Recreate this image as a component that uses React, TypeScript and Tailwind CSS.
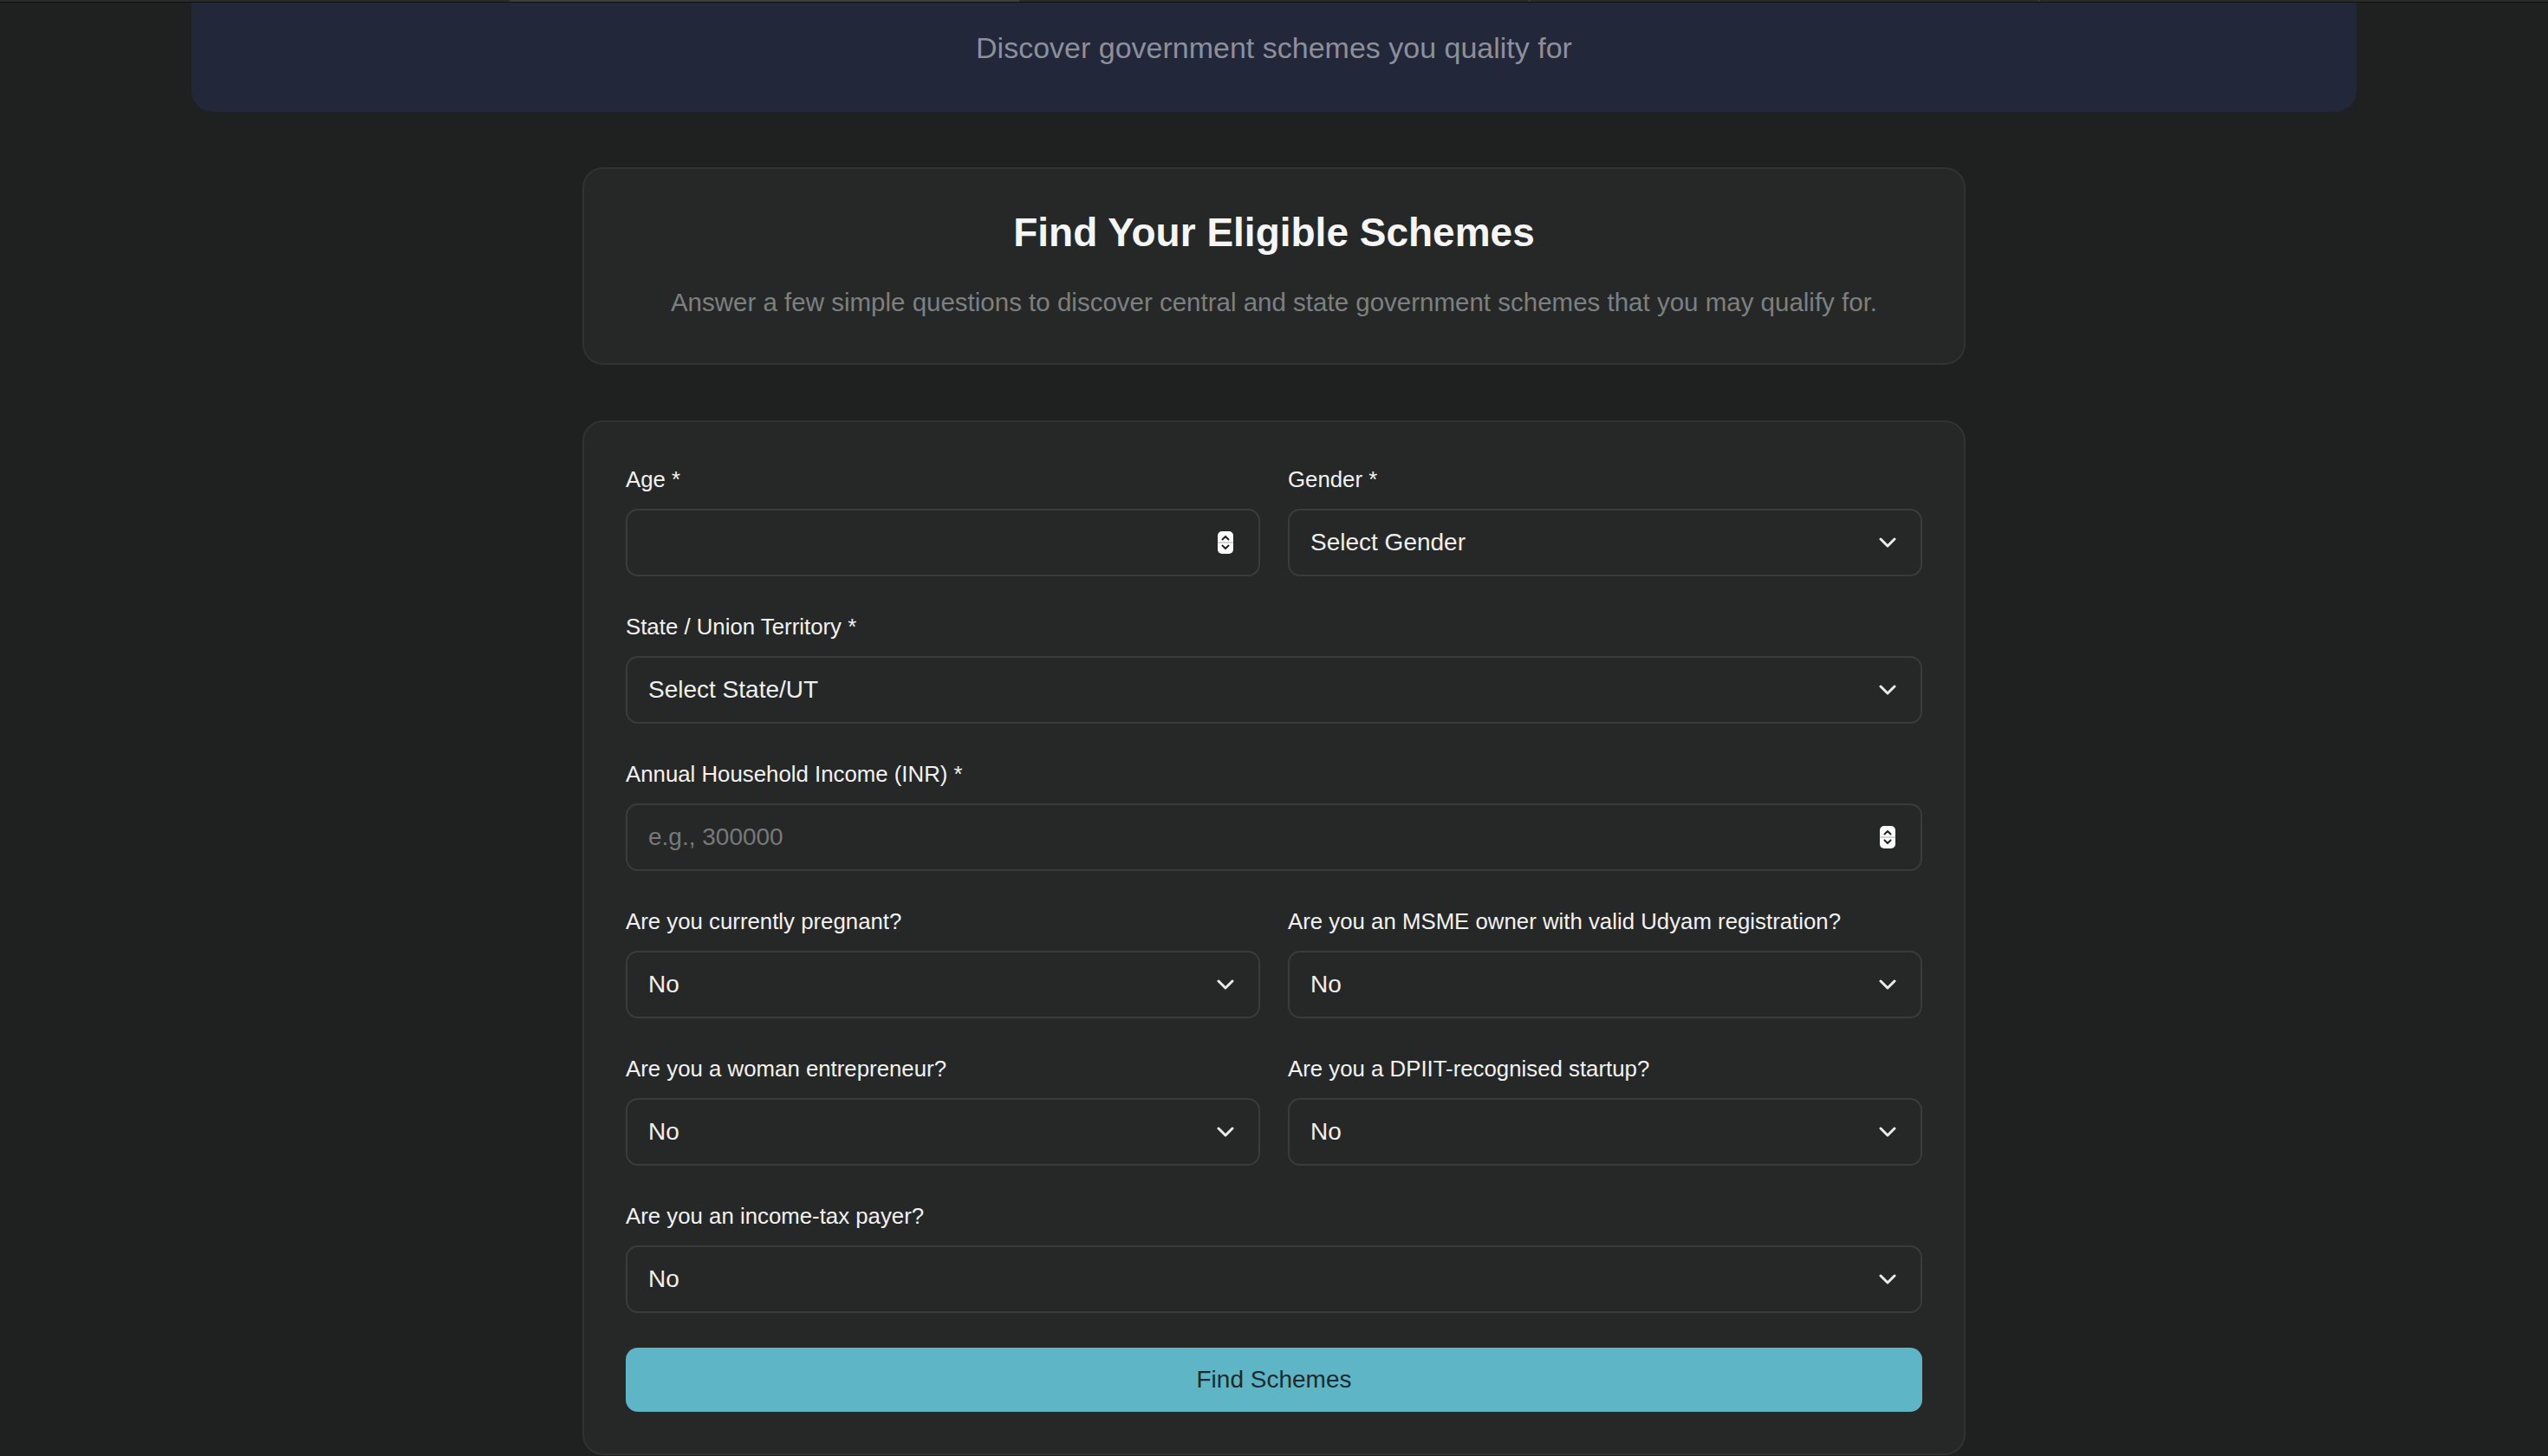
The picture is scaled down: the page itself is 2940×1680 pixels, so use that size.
import React from 'react';

const tabs = [0, 1, 2, 3, 4];

function Chevron() {
  return (
    <svg width="20" height="12" viewBox="0 0 20 12" fill="none" className="shrink-0">
      <path d="M2 2 L10 10 L18 2" stroke="#ececec" strokeWidth="3" strokeLinecap="round" strokeLinejoin="round" />
    </svg>
  );
}

function Spinner() {
  return (
    <svg width="18" height="26" viewBox="0 0 18 26" fill="none" className="shrink-0">
      <rect width="18" height="26" rx="5" fill="#ffffff" />
      <line x1="0" y1="13" x2="18" y2="13" stroke="#d4d4d4" strokeWidth="2" />
      <path d="M5.5 9.5 L9 6 L12.5 9.5" stroke="#222" strokeWidth="2" strokeLinecap="round" strokeLinejoin="round" />
      <path d="M5.5 16.5 L9 20 L12.5 16.5" stroke="#222" strokeWidth="2" strokeLinecap="round" strokeLinejoin="round" />
    </svg>
  );
}

function Field({ label, children }: { label: string; children: React.ReactNode }) {
  return (
    <div className="flex flex-col gap-[16px]">
      <label className="text-[25.8px] leading-[36px] font-medium text-[#f2f2f2]">{label}</label>
      {children}
    </div>
  );
}

function NumberBox({ placeholder = '' }: { placeholder?: string }) {
  return (
    <div className="flex items-center h-[78px] rounded-[14px] border-2 border-[#3a3c3c] bg-[#262828] pl-[24px] pr-[29px]">
      <input
        type="text"
        placeholder={placeholder}
        className="flex-1 bg-transparent outline-none text-[28px] text-[#eeeeee] placeholder:text-[#77797a]"
      />
      <Spinner />
    </div>
  );
}

function SelectBox({ value }: { value: string }) {
  return (
    <div className="flex items-center h-[78px] rounded-[14px] border-2 border-[#3a3c3c] bg-[#262828] pl-[24px] pr-[28px]">
      <select className="flex-1 appearance-none bg-transparent outline-none text-[28px] text-[#efefef]">
        <option>{value}</option>
      </select>
      <Chevron />
    </div>
  );
}

export default function App() {
  return (
    <div className="min-h-screen bg-[#1f2120] font-['Liberation_Sans',Arial,sans-serif] overflow-hidden">
      <div className="grid grid-cols-5 h-[3px] bg-[#2a2b2b] border-b border-[#111]">
        {tabs.map((t) => (
          <div key={t} className={t === 1 ? 'bg-[#3d3e40]' : t > 2 ? 'border-l border-[#444]' : ''} />
        ))}
      </div>

      <header className="mx-auto w-[2498px] rounded-b-[24px] bg-[#222739] pt-[30px] pb-[52px] text-center">
        <p className="text-[34px] leading-[44px] text-[#8c909a]">Discover government schemes you quality for</p>
      </header>

      <main className="mx-auto w-[1596px] mt-[64px] flex flex-col gap-[64px]">
        <section className="rounded-[24px] border-2 border-[#313333] bg-[#262828] p-[48px] text-center">
          <h2 className="text-[46px] leading-[50px] font-bold text-[#f5f5f5]">Find Your Eligible Schemes</h2>
          <p className="mt-[34px] text-[29.5px] leading-[44px] text-[#7d8080]">
            Answer a few simple questions to discover central and state government schemes that you may qualify for.
          </p>
        </section>

        <section className="rounded-[24px] border-2 border-[#313333] bg-[#262828] p-[48px] flex flex-col gap-[40px]">
          <div className="grid grid-cols-2 gap-x-[32px]">
            <Field label="Age *">
              <NumberBox />
            </Field>
            <Field label="Gender *">
              <SelectBox value="Select Gender" />
            </Field>
          </div>
          <Field label="State / Union Territory *">
            <SelectBox value="Select State/UT" />
          </Field>
          <Field label="Annual Household Income (INR) *">
            <NumberBox placeholder="e.g., 300000" />
          </Field>
          <div className="grid grid-cols-2 gap-x-[32px]">
            <Field label="Are you currently pregnant?">
              <SelectBox value="No" />
            </Field>
            <Field label="Are you an MSME owner with valid Udyam registration?">
              <SelectBox value="No" />
            </Field>
          </div>
          <div className="grid grid-cols-2 gap-x-[32px]">
            <Field label="Are you a woman entrepreneur?">
              <SelectBox value="No" />
            </Field>
            <Field label="Are you a DPIIT-recognised startup?">
              <SelectBox value="No" />
            </Field>
          </div>
          <Field label="Are you an income-tax payer?">
            <SelectBox value="No" />
          </Field>
          <button className="h-[74px] rounded-[14px] bg-[#5db5c5] text-[28px] font-medium text-[#1d2a2e]">
            Find Schemes
          </button>
        </section>
      </main>
    </div>
  );
}
